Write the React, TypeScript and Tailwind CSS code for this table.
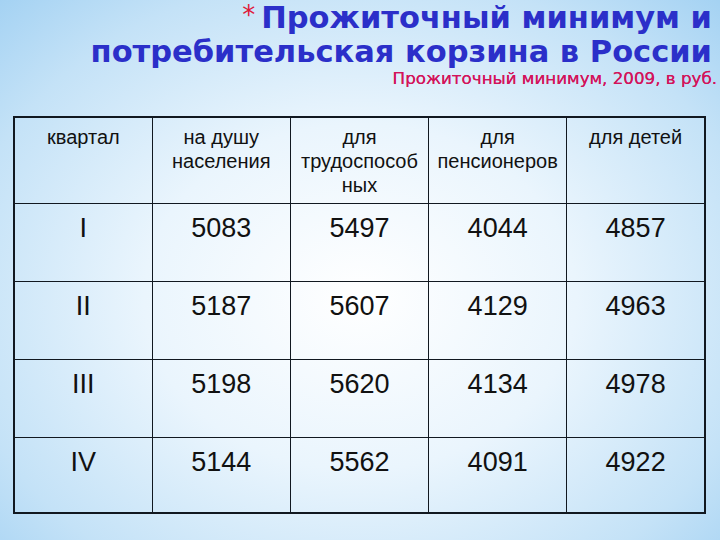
const headers: string[][] = [
  ["квартал"],
  ["на душу", "населения"],
  ["для", "трудоспособ", "ных"],
  ["для", "пенсионеров"],
  ["для детей"],
];

const rows: string[][] = [
  ["I", "5083", "5497", "4044", "4857"],
  ["II", "5187", "5607", "4129", "4963"],
  ["III", "5198", "5620", "4134", "4978"],
  ["IV", "5144", "5562", "4091", "4922"],
];

export default function App() {
  return (
    <div className="w-[720px] h-[540px] overflow-hidden flex flex-col bg-[radial-gradient(ellipse_75%_80%_at_50%_55%,#ffffff_0%,#eaf5fd_40%,#c4e2f7_75%,#9ecff2_100%)]">
      {/* Title */}
      <div className="flex flex-col items-end pr-[8px] pt-[1px] font-['DejaVu_Sans',sans-serif]">
        <h1 className="text-right text-[30.5px] leading-[34px] font-bold text-[#2b2fc9]">
          <span className="text-[#e0183a] text-[26px] align-top relative top-[-3px] mr-[6px] font-normal">*</span>
          Прожиточный минимум и
          <br />
          потребительская корзина в России
        </h1>
        <p className="text-[16.7px] leading-[18px] text-[#d3145a] mr-[-5px] mt-[0px] [text-shadow:0_0_0.4px_#d3145a]">
          Прожиточный минимум, 2009, в руб.
        </p>
      </div>

      {/* Table */}
      <div className="pl-[13px] pt-[29px]">
        <table className="w-[693px] border-collapse border-2 border-[#111820] font-['Liberation_Sans',Arial,sans-serif] text-[#111]">
          <thead>
            <tr className="h-[86px]">
              {headers.map((lines, i) => (
                <th
                  key={i}
                  className="w-[138px] border border-[#111820] align-top pt-[7px] text-[20px] leading-[24px] font-normal text-center"
                >
                  {lines.map((l, j) => (
                    <div key={j}>{l}</div>
                  ))}
                </th>
              ))}
            </tr>
          </thead>
          <tbody>
            {rows.map((r, i) => (
              <tr key={i} className={i === 3 ? "h-[76px]" : "h-[78px]"}>
                {r.map((c, j) => (
                  <td
                    key={j}
                    className="border border-[#111820] align-top pt-[8px] text-[27px] leading-[32px] text-center"
                  >
                    {c}
                  </td>
                ))}
              </tr>
            ))}
          </tbody>
        </table>
      </div>
    </div>
  );
}
